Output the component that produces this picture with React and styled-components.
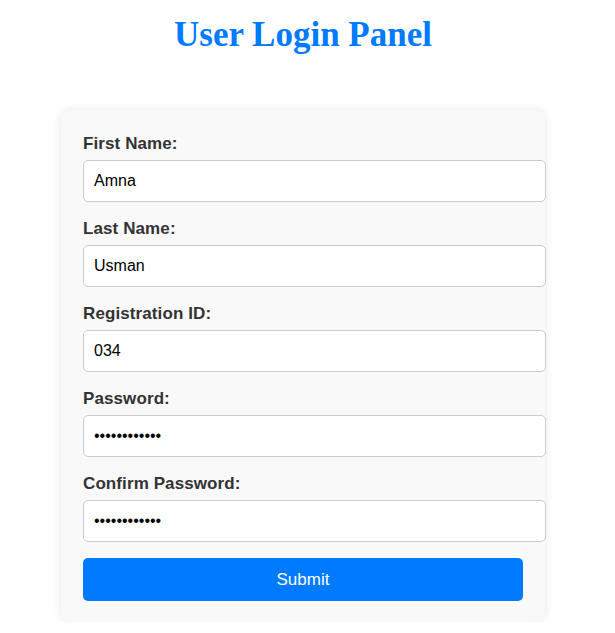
import React from "react";
import styled, { createGlobalStyle } from "styled-components";

const GlobalStyle = createGlobalStyle`
  body {
    margin: 0;
    background: #ffffff;
    font-family: "Liberation Sans", Arial, sans-serif;
  }
`;

const Page = styled.div`
  width: 606px;
  display: flex;
  flex-direction: column;
  align-items: center;
  padding-top: 15px;
`;

const Title = styled.h1`
  margin: 0;
  font-family: "Liberation Serif", "Times New Roman", serif;
  font-size: 35px;
  line-height: 39px;
  font-weight: bold;
  color: #007bff;
`;

const Card = styled.form`
  width: 440px;
  margin-top: 56px;
  padding: 25px 22px 21px;
  background: #f9f9f9;
  border-radius: 10px;
  box-shadow: 0 0 10px rgba(0, 0, 0, 0.1);
`;

const Field = styled.div`
  display: flex;
  flex-direction: column;
  margin-bottom: 18px;

  &:last-of-type {
    margin-bottom: 16px;
  }
`;

const Label = styled.label`
  display: block;
  margin-bottom: 7px;
  font-size: 17px;
  line-height: 18px;
  letter-spacing: 0.1px;
  font-weight: bold;
  color: #333333;
`;

const Input = styled.input`
  box-sizing: border-box;
  width: 463px;
  height: 42px;
  padding: 0 10px;
  border: 1px solid #cccccc;
  border-radius: 5px;
  background: #ffffff;
  font-family: "Liberation Sans", Arial, sans-serif;
  font-size: 16px;
  color: #000000;
  outline: none;
`;

const SubmitButton = styled.button`
  display: block;
  width: 440px;
  height: 43px;
  border: none;
  border-radius: 5px;
  background: #007bff;
  color: #ffffff;
  font-family: "Liberation Sans", Arial, sans-serif;
  font-size: 17px;
  cursor: pointer;
`;

const fields = [
  { id: "first", label: "First Name:", type: "text", value: "Amna" },
  { id: "last", label: "Last Name:", type: "text", value: "Usman" },
  { id: "reg", label: "Registration ID:", type: "text", value: "034" },
  { id: "pass", label: "Password:", type: "password", value: "amna12345678" },
  { id: "confirm", label: "Confirm Password:", type: "password", value: "amna12345678" },
];

function App() {
  return (
    <>
      <GlobalStyle />
      <Page>
        <Title>User Login Panel</Title>
        <Card onSubmit={(e) => e.preventDefault()}>
          {fields.map((f) => (
            <Field key={f.id}>
              <Label htmlFor={f.id}>{f.label}</Label>
              <Input id={f.id} type={f.type} defaultValue={f.value} />
            </Field>
          ))}
          <SubmitButton type="submit">Submit</SubmitButton>
        </Card>
      </Page>
    </>
  );
}

export default App;
